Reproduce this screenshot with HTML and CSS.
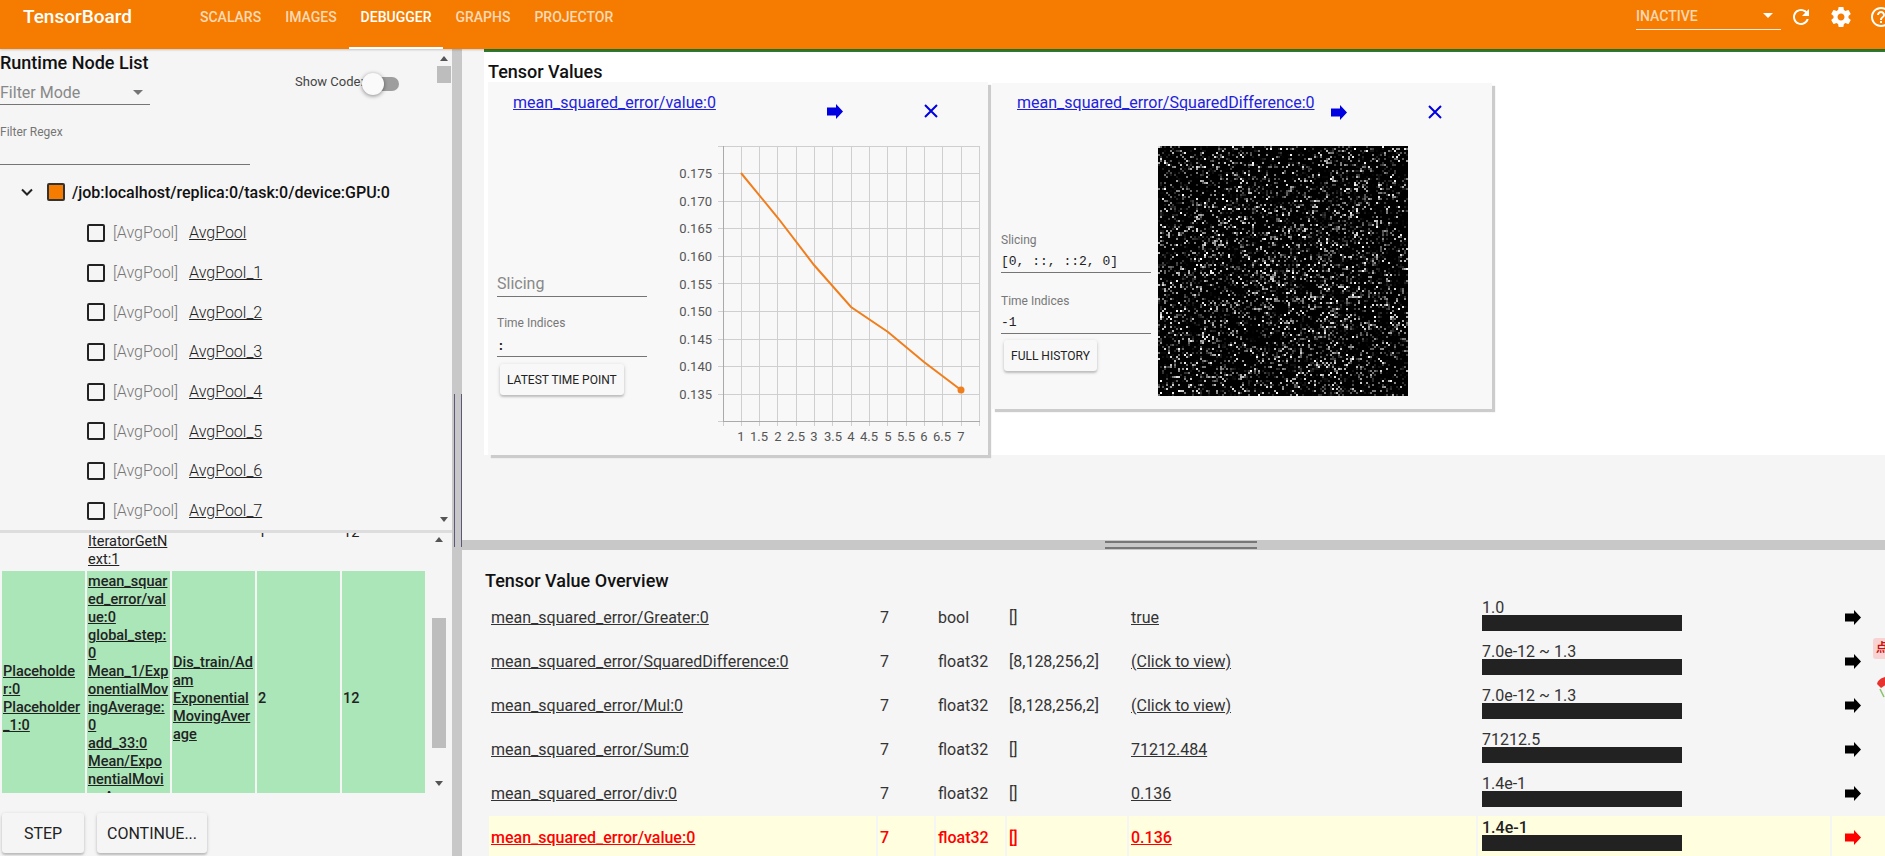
FILE: index.html
```html
<!DOCTYPE html>
<html>
	<head>
		<meta charset="utf-8">
		<title>TensorBoard</title>
		<link rel="stylesheet" href="styles.css">
		<script defer src="app.js"></script>
	</head>

	<body>
		<svg class="defs" width="0" height="0">
			<symbol id="go" viewBox="0 0 16 15"><path d="M0 3.500h9V0l7 7.500-7 7.500v-3.500H0z"/></symbol>
		</svg>

		<header class="toolbar">
			<span class="logo">TensorBoard</span>
			<nav class="tabs">
				<a class="tab">SCALARS</a>
				<a class="tab">IMAGES</a>
				<a class="tab active">DEBUGGER</a>
				<a class="tab">GRAPHS</a>
				<a class="tab">PROJECTOR</a>
			</nav>
			<div class="run-select">
				<span>INACTIVE</span>
				<i class="caret"></i>
			</div>
			<svg class="tool" viewBox="0 0 24 24"><path d="M17.65 6.350C16.200 4.900 14.210 4 12 4c-4.420 0-7.990 3.580-7.990 8s3.570 8 7.990 8c3.730 0 6.840-2.550 7.730-6h-2.080c-.82 2.330-3.040 4-5.650 4-3.310 0-6-2.690-6-6s2.690-6 6-6c1.660 0 3.140.69 4.220 1.780L13 11h7V4l-2.350 2.350z"/></svg>
			<svg class="tool" viewBox="0 0 24 24"><path d="M19.430 12.980c.04-.32.07-.64.07-.98s-.03-.66-.07-.98l2.110-1.650c.19-.15.24-.42.12-.64l-2-3.460c-.12-.22-.39-.3-.61-.22l-2.490 1c-.52-.4-1.080-.73-1.690-.98l-.38-2.650C14.460 2.180 14.250 2 14 2h-4c-.25 0-.46.18-.49.42l-.38 2.650c-.61.25-1.170.59-1.690.98l-2.490-1c-.23-.09-.49 0-.61.22l-2 3.460c-.13.22-.07.49.12.64l2.110 1.650c-.04.32-.07.65-.07.98s.03.66.07.98l-2.110 1.650c-.19.15-.24.42-.12.64l2 3.460c.12.22.39.3.61.22l2.490-1c.52.4 1.080.73 1.690.98l.38 2.650c.03.24.24.42.49.42h4c.25 0 .46-.18.49-.42l.38-2.650c.61-.25 1.170-.59 1.690-.98l2.490 1c.23.09.49 0 .61-.22l2-3.460c.12-.22.07-.49-.12-.64l-2.110-1.650zM12 15.500c-1.930 0-3.500-1.570-3.500-3.500s1.570-3.500 3.500-3.500 3.500 1.570 3.500 3.500-1.570 3.500-3.500 3.500z"/></svg>
			<svg class="tool help" viewBox="0 0 24 24"><path d="M11 18h2v-2h-2v2zm1-16C6.480 2 2 6.480 2 12s4.480 10 10 10 10-4.480 10-10S17.520 2 12 2zm0 18c-4.410 0-8-3.590-8-8s3.590-8 8-8 8 3.590 8 8-3.590 8-8 8zm0-14c-2.210 0-4 1.790-4 4h2c0-1.100.9-2 2-2s2 .9 2 2c0 2-3 1.750-3 5h2c0-2.250 3-2.500 3-5 0-2.210-1.790-4-4-4z"/></svg>
		</header>

		<main class="debugger">
			<aside class="sidebar">
				<section class="node-pane">
					<div class="tree">
						<div class="tree-head">
							<div class="tree-filter">
								<h2 class="pane-title">Runtime Node List</h2>
								<div class="filter-mode">
									<span>Filter Mode</span>
									<i class="caret"></i>
								</div>
							</div>
							<div class="show-code">
								<span>Show Code:</span>
								<span class="switch"><i></i></span>
							</div>
						</div>
						<label class="regex">Filter Regex</label>
						<div class="regex-input"></div>

						<div class="device">
							<svg class="chevron" viewBox="0 0 12 8"><path d="M1 1.500l5 5 5-5" /></svg>
							<span class="device-box"></span>
							<span>/job:localhost/replica:0/task:0/device:GPU:0</span>
						</div>

						<ul class="nodes">
							<li><span class="check"></span><span class="op">[AvgPool]</span><a>AvgPool</a></li>
							<li><span class="check"></span><span class="op">[AvgPool]</span><a>AvgPool_1</a></li>
							<li><span class="check"></span><span class="op">[AvgPool]</span><a>AvgPool_2</a></li>
							<li><span class="check"></span><span class="op">[AvgPool]</span><a>AvgPool_3</a></li>
							<li><span class="check"></span><span class="op">[AvgPool]</span><a>AvgPool_4</a></li>
							<li><span class="check"></span><span class="op">[AvgPool]</span><a>AvgPool_5</a></li>
							<li><span class="check"></span><span class="op">[AvgPool]</span><a>AvgPool_6</a></li>
							<li><span class="check"></span><span class="op">[AvgPool]</span><a>AvgPool_7</a></li>
						</ul>
					</div>
					<div class="scroll scroll-nodes">
						<i class="up"></i>
						<b></b>
						<i class="down"></i>
					</div>
				</section>

				<section class="watch-pane">
					<div class="watch-clip">
						<table class="watch">
							<tr>
								<td></td>
								<td><a>IteratorGetN<br>ext:0</a><br><a>IteratorGetN<br>ext:1</a></td>
								<td></td>
								<td>1</td>
								<td>12</td>
							</tr>
							<tr class="current">
								<td><a>Placeholde<br>r:0</a><br><a>Placeholder<br>_1:0</a></td>
								<td><a>mean_squar<br>ed_error/val<br>ue:0</a><br><a>global_step:<br>0</a><br><a>Mean_1/Exp<br>onentialMov<br>ingAverage:<br>0</a><br><a>add_33:0</a><br><a>Mean/Expo<br>nentialMovi<br>ngAverage:<br>0</a></td>
								<td><a>Dis_train/Ad<br>am</a><br><a>Exponential<br>MovingAver<br>age</a></td>
								<td>2</td>
								<td>12</td>
							</tr>
						</table>
					</div>
					<div class="scroll scroll-watch">
						<i class="up"></i>
						<b></b>
						<i class="down"></i>
					</div>
				</section>

				<footer class="stepper">
					<button class="raised step">STEP</button>
					<button class="raised">CONTINUE...</button>
				</footer>
			</aside>

			<div class="divider"><i></i></div>

			<div class="workspace">
				<section class="values-area">
					<div class="values">
						<h2 class="pane-title">Tensor Values</h2>
						<div class="cards">
							<article class="card card-chart">
								<div class="card-head">
									<a class="tensor-link">mean_squared_error/value:0</a>
									<svg class="go go-blue"><use href="#go"/></svg>
									<svg class="close" viewBox="0 0 14 14"><path d="M1 1l12 12M13 1L1 13"/></svg>
								</div>
								<div class="card-body">
									<div class="controls">
										<div class="field">
											<label></label>
											<div class="input placeholder">Slicing</div>
										</div>
										<div class="field">
											<label>Time Indices</label>
											<div class="input mono">:</div>
										</div>
										<button class="raised small">LATEST TIME POINT</button>
									</div>
									<svg class="chart" viewBox="680 145 305 300">
										<path class="grid" d="M723.500 146V426M741.500 146V426M759.500 146V426M777.500 146V426M796.500 146V426M814.500 146V426M832.500 146V426M851.500 146V426M869.500 146V426M887.500 146V426M906.500 146V426M924.500 146V426M942.500 146V426M961.500 146V426M979.500 146V426"/>
										<path class="grid" d="M718 146.500H980M718 173.500H980M718 201.500H980M718 228.500H980M718 256.500H980M718 283.500H980M718 311.500H980M718 339.500H980M718 366.500H980M718 394.500H980M718 421.500H980"/>
										<path class="axis" d="M723.500 146V422M723 421.500H980"/>
										<g class="y-labels">
											<text x="712" y="178">0.175</text>
											<text x="712" y="206">0.170</text>
											<text x="712" y="233">0.165</text>
											<text x="712" y="261">0.160</text>
											<text x="712" y="289">0.155</text>
											<text x="712" y="316">0.150</text>
											<text x="712" y="344">0.145</text>
											<text x="712" y="371">0.140</text>
											<text x="712" y="399">0.135</text>
										</g>
										<g class="x-labels">
											<text x="741" y="441">1</text>
											<text x="759" y="441">1.5</text>
											<text x="778" y="441">2</text>
											<text x="796" y="441">2.5</text>
											<text x="814" y="441">3</text>
											<text x="833" y="441">3.5</text>
											<text x="851" y="441">4</text>
											<text x="869" y="441">4.5</text>
											<text x="888" y="441">5</text>
											<text x="906" y="441">5.5</text>
											<text x="924" y="441">6</text>
											<text x="942" y="441">6.5</text>
											<text x="961" y="441">7</text>
										</g>
										<path class="series" d="M741 173L778 218L814 265L851 307L888 332L924 362L961 390"/>
										<circle class="series-end" cx="961" cy="390" r="3.500"/>
									</svg>
								</div>
							</article>

							<article class="card card-image">
								<div class="card-head">
									<a class="tensor-link">mean_squared_error/SquaredDifference:0</a>
									<svg class="go go-blue"><use href="#go"/></svg>
									<svg class="close" viewBox="0 0 14 14"><path d="M1 1l12 12M13 1L1 13"/></svg>
								</div>
								<div class="card-body">
									<div class="controls">
										<div class="field">
											<label>Slicing</label>
											<div class="input mono">[0, ::, ::2, 0]</div>
										</div>
										<div class="field">
											<label>Time Indices</label>
											<div class="input mono">-1</div>
										</div>
										<button class="raised small">FULL HISTORY</button>
									</div>
									<canvas id="Noise" class="noise" width="125" height="125"></canvas>
								</div>
							</article>
						</div>
					</div>
				</section>

				<div class="splitter"><i></i></div>

				<section class="overview">
					<h2 class="pane-title">Tensor Value Overview</h2>
					<table class="tensors">
						<colgroup>
							<col class="c-name"><col class="c-count"><col class="c-type"><col class="c-shape"><col class="c-value"><col class="c-stat"><col class="c-go">
						</colgroup>
						<tr>
							<td><a>mean_squared_error/Greater:0</a></td>
							<td>7</td><td>bool</td><td>[]</td>
							<td><a>true</a></td>
							<td class="stat"><div>1.0</div><i></i></td>
							<td class="jump"><svg class="go"><use href="#go"/></svg></td>
						</tr>
						<tr>
							<td><a>mean_squared_error/SquaredDifference:0</a></td>
							<td>7</td><td>float32</td><td>[8,128,256,2]</td>
							<td><a>(Click to view)</a></td>
							<td class="stat"><div>7.0e-12 ~ 1.3</div><i></i></td>
							<td class="jump"><svg class="go"><use href="#go"/></svg></td>
						</tr>
						<tr>
							<td><a>mean_squared_error/Mul:0</a></td>
							<td>7</td><td>float32</td><td>[8,128,256,2]</td>
							<td><a>(Click to view)</a></td>
							<td class="stat"><div>7.0e-12 ~ 1.3</div><i></i></td>
							<td class="jump"><svg class="go"><use href="#go"/></svg></td>
						</tr>
						<tr>
							<td><a>mean_squared_error/Sum:0</a></td>
							<td>7</td><td>float32</td><td>[]</td>
							<td><a>71212.484</a></td>
							<td class="stat"><div>71212.5</div><i></i></td>
							<td class="jump"><svg class="go"><use href="#go"/></svg></td>
						</tr>
						<tr>
							<td><a>mean_squared_error/div:0</a></td>
							<td>7</td><td>float32</td><td>[]</td>
							<td><a>0.136</a></td>
							<td class="stat"><div>1.4e-1</div><i></i></td>
							<td class="jump"><svg class="go"><use href="#go"/></svg></td>
						</tr>
						<tr class="active-row">
							<td><a>mean_squared_error/value:0</a></td>
							<td>7</td><td>float32</td><td>[]</td>
							<td><a>0.136</a></td>
							<td class="stat"><div>1.4e-1</div><i></i></td>
							<td class="jump"><svg class="go"><use href="#go"/></svg></td>
						</tr>
					</table>
				</section>
			</div>
		</main>

		<div class="float-badge">点</div>
		<svg class="float-chute" viewBox="0 0 10 26"><path d="M0 8C1 4 4 2 8 1l2 0v7L4 12z" fill="#e8322e"/><path d="M3 13l4 8" stroke="#8cbf6a" stroke-width="1.500" fill="none"/></svg>
	</body>
</html>
```

FILE: styles.css
```css
:root {
	box-sizing: border-box;
}

*, *::before, *::after {
	box-sizing: inherit;
}

html, body {
	height: 100%;
}

body {
	margin: 0;
	overflow: hidden;
	background-color: #f5f5f5;
	color: #212121;
	font-family: "Roboto", "Noto Sans CJK SC", sans-serif;
	font-size: 16px;
}

a {
	text-decoration: underline;
}

.defs {
	display: block;
	height: 0;
}

.caret {
	width: 0;
	height: 0;
	border-inline: 5px solid transparent;
	border-top: 5px solid #757575;
}

/* top bar */
.toolbar {
	position: relative;
	z-index: 2;
	display: flex;
	height: 49px;
	padding-left: 23px;
	overflow: hidden;
	background-color: #f57c00;
	box-shadow: 0 1px 2px rgba(0, 0, 0, 0.2);
	color: white;
}

.logo {
	width: 165px;
	flex-shrink: 0;
	padding-top: 5px;
	font-size: 19px;
	font-weight: 500;
	line-height: 24px;
}

.tabs {
	display: flex;
}

.tab {
	height: 49px;
	padding: 8px 12px 0;
	border-bottom: 2px solid transparent;
	color: rgba(255, 255, 255, 0.72);
	font-size: 14px;
	font-weight: 500;
	line-height: 18px;
	text-decoration: none;

	&.active {
		border-bottom-color: white;
		color: white;
	}
}

.run-select {
	display: flex;
	align-items: center;
	justify-content: space-between;
	width: 145px;
	height: 30px;
	margin-left: auto;
	padding: 2px 8px 0 0;
	border-bottom: 1px solid rgba(255, 255, 255, 0.85);
	color: rgba(255, 255, 255, 0.7);
	font-size: 14px;
	font-weight: 500;

	& .caret {
		border-top-color: white;
	}
}

.tool {
	width: 24px;
	height: 24px;
	flex-shrink: 0;
	margin-top: 5px;
	margin-left: 16px;
	fill: white;

	&:first-of-type {
		margin-left: 8px;
	}

	&.help {
		margin-right: -8px;
	}
}

/* page frame */
.debugger {
	display: grid;
	grid-template-columns: 452px 10px 1fr;
	height: 807px;
}

.pane-title {
	margin: 0;
	color: #111;
	font-size: 18px;
	font-weight: 500;
	line-height: 20px;
}

.divider {
	padding-top: 345px;
	background-color: #c8c8c8;

	& > i {
		display: block;
		width: 8px;
		height: 153px;
		margin-left: 2px;
		border-inline: 1px solid #5a5a78;
	}
}

/* left column */
.sidebar {
	display: flex;
	flex-direction: column;
	min-width: 0;
}

.node-pane {
	display: flex;
	height: 481px;
	overflow: hidden;
}

.tree {
	width: 437px;
	flex-shrink: 0;
	padding-top: 4px;
}

.tree-head {
	display: flex;
}

.tree-filter {
	width: 295px;
}

.filter-mode {
	display: flex;
	align-items: center;
	justify-content: space-between;
	width: 150px;
	height: 26px;
	margin-top: 6px;
	padding: 2px 7px 0 0;
	border-bottom: 1px solid #757575;
	color: #888;
}

.show-code {
	display: flex;
	align-items: center;
	height: 24px;
	margin-top: 16px;
	color: #444;
	font-size: 13px;
}

.switch {
	position: relative;
	display: block;
	width: 29px;
	height: 14px;
	margin-top: 6px;
	margin-left: 6px;
	border-radius: 7px;
	background-color: #9e9e9e;

	& > i {
		position: absolute;
		top: -4px;
		left: -8px;
		width: 22px;
		height: 22px;
		border-radius: 50%;
		background-color: #fafafa;
		box-shadow: 0 1px 4px rgba(0, 0, 0, 0.45);
	}
}

.regex {
	display: block;
	margin-top: 20px;
	color: #757575;
	font-size: 12px;
	line-height: 14px;
}

.regex-input {
	width: 250px;
	height: 26px;
	border-bottom: 1px solid #757575;
}

.device {
	display: flex;
	align-items: center;
	height: 24px;
	margin-top: 15px;
	padding-left: 21px;
	color: #111;
	font-weight: 500;
}

.chevron {
	width: 12px;
	height: 8px;
	fill: none;
	stroke: #222;
	stroke-width: 2;
}

.device-box {
	width: 18px;
	height: 18px;
	margin-inline: 14px 7px;
	border: 2px solid #333;
	border-radius: 2px;
	background-color: #f57c00;
}

.nodes {
	display: grid;
	grid-auto-rows: 39.700px;
	margin: 9px 0 0;
	padding: 0 0 0 87px;
	list-style: none;
	font-weight: 300;

	& > li {
		display: flex;
		align-items: center;
	}

	& a {
		margin-left: 11px;
		color: #222;
	}
}

.check {
	width: 18px;
	height: 18px;
	margin-right: 8px;
	border: 2px solid #222;
	border-radius: 2px;
}

.op {
	color: #777;
}

.scroll {
	display: flex;
	flex-direction: column;
	align-items: center;
	width: 14px;
	flex-shrink: 0;

	& > b {
		display: block;
		width: 100%;
		background-color: #bdbdbd;
	}

	& > i {
		width: 0;
		height: 0;
		border-inline: 4px solid transparent;
	}

	& > .up {
		border-bottom: 5px solid #555;
	}

	& > .down {
		border-top: 5px solid #555;
	}
}

.scroll-nodes {
	padding-top: 7px;

	& > b {
		height: 17px;
		margin-top: 5px;
	}

	& > .down {
		margin-top: 434px;
	}
}

.scroll-watch {
	padding-top: 4px;

	& > b {
		height: 130px;
		margin-top: 76px;
	}

	& > .down {
		margin-top: 33px;
	}
}

.watch-pane {
	display: flex;
	height: 263px;
	border-top: 3px solid #ddd;
}

.watch-clip {
	width: 432px;
	flex-shrink: 0;
	overflow: hidden;
}

.watch {
	width: 427px;
	margin-top: -38px;
	border-spacing: 2px;
	table-layout: fixed;
	font-size: 14.500px;
	line-height: 18px;

	& td {
		padding: 0 1px;
		overflow: hidden;
		color: #222;
		white-space: nowrap;
	}

	& .current td {
		padding-block: 2px;
		background-color: #abe6b9;
		font-weight: 500;
	}
}

.stepper {
	display: flex;
	gap: 13px;
	padding: 20px 0 0 2px;
}

.raised {
	height: 40px;
	padding: 0 10px;
	border: 0;
	border-radius: 3px;
	background-color: #f5f5f5;
	box-shadow: 0 2px 2px rgba(0, 0, 0, 0.16), 0 1px 4px rgba(0, 0, 0, 0.14);
	color: #222;
	font-family: inherit;
	font-size: 16px;

	&.step {
		width: 82px;
	}

	&.small {
		height: 31px;
		margin: 7px 0 0 3px;
		padding: 0 7px;
		background-color: #f8f8f8;
		font-size: 12px;
	}
}

/* right column */
.workspace {
	display: flex;
	flex-direction: column;
	min-width: 0;
}

.values-area {
	height: 491px;
	padding-left: 22px;
}

.values {
	height: 406px;
	padding: 10px 0 0 4px;
	border-top: 3px solid #2e7d32;
	background-color: white;
}

.cards {
	display: flex;
	align-items: flex-start;
	gap: 4px;
}

.card {
	width: 500px;
	flex-shrink: 0;
	background-color: #f8f8f8;
	box-shadow: 3px 3px 1px #cccccc;
}

.card-chart {
	height: 373px;
}

.card-image {
	height: 326px;
	margin-top: 1px;
}

.card-head {
	display: grid;
	grid-template-columns: 314px 97px 14px;
	height: 63px;
	padding-left: 25px;
}

.tensor-link {
	margin-top: 11px;
	color: #2222dd;
	line-height: 20px;
	white-space: nowrap;
}

.card-image .tensor-link {
	margin-top: 10px;
}

.go {
	display: block;
	width: 16px;
	height: 15px;
	fill: black;

	&.go-blue {
		margin-top: 22px;
		fill: #0000e0;
	}
}

.close {
	width: 14px;
	height: 14px;
	margin-top: 22px;
	fill: none;
	stroke: #0000e0;
	stroke-width: 2;
}

.card-body {
	display: flex;
}

.controls {
	width: 150px;
	flex-shrink: 0;
	margin-left: 9px;
	padding-top: 112px;
}

.card-image .controls {
	padding-top: 87px;
}

.field + .field {
	margin-top: 19px;
}

.card-image .field + .field {
	margin-top: 21px;
}

.card-image .raised.small {
	margin-top: 6px;
}

.field > label {
	display: block;
	height: 14px;
	color: #777;
	font-size: 12px;
	line-height: 14px;
}

.input {
	height: 26px;
	border-bottom: 1px solid #757575;
	line-height: 26px;

	&.placeholder {
		color: #888;
	}

	&.mono {
		color: #222;
		font-family: "Liberation Mono", monospace;
		font-size: 13px;
		line-height: 29px;
	}
}

.card-chart .input.mono {
	height: 27px;
	font-weight: 700;
	line-height: 33px;
}

.chart {
	width: 305px;
	height: 300px;
	margin-left: 33px;
	overflow: visible;

	& .grid {
		fill: none;
		stroke: #cfcfcf;
		stroke-width: 1;
		shape-rendering: crispEdges;
	}

	& .axis {
		fill: none;
		stroke: #aaaaaa;
		stroke-width: 1;
		shape-rendering: crispEdges;
	}

	& text {
		fill: #555;
		font-size: 13px;
	}

	& .y-labels text {
		text-anchor: end;
	}

	& .x-labels text {
		text-anchor: middle;
	}

	& .series {
		fill: none;
		stroke: #f07e1c;
		stroke-width: 2;
	}

	& .series-end {
		fill: #f07e1c;
	}
}

.noise {
	width: 250px;
	height: 250px;
	margin-left: 7px;
	image-rendering: pixelated;
}

.splitter {
	height: 10px;
	flex-shrink: 0;
	padding: 1px 0 0 643px;
	background-color: #c8c8c8;

	& > i {
		display: block;
		width: 152px;
		height: 8px;
		border-block: 2px solid #777;
	}
}

.overview {
	flex-grow: 1;
	min-height: 0;
	padding: 21px 0 0 23px;
	overflow: hidden;
}

.tensors {
	width: 1396px;
	margin: 3px 0 0 2px;
	border-spacing: 2px;
	table-layout: fixed;
	color: #333;

	& .c-name { width: 387px; }
	& .c-count { width: 56px; }
	& .c-type { width: 69px; }
	& .c-shape { width: 120px; }
	& .c-value { width: 347px; }
	& .c-stat { width: 352px; }
	& .c-go { width: 53px; }

	& td {
		height: 42px;
		padding: 0 2px;
	}

	& .stat {
		padding: 4px 4px 0;
		vertical-align: top;

		& > div {
			line-height: 15px;
		}

		& > i {
			display: block;
			width: 200px;
			height: 16px;
			background-color: #222;
		}
	}

	& .jump {
		padding-left: 13px;
	}

	& .active-row td {
		background-color: #ffffe0;
		color: #f00;
		font-weight: 500;
	}

	& .active-row .stat > div {
		color: #222;
	}

	& .active-row .go {
		fill: #f00;
	}
}

/* page helper floating on the right edge */
.float-badge {
	position: absolute;
	top: 638px;
	left: 1873px;
	width: 20px;
	height: 21px;
	padding-left: 3px;
	border-radius: 3px;
	background-color: #f9d3d3;
	color: #c81414;
	font-size: 12px;
	font-weight: 700;
	line-height: 21px;
}

.float-chute {
	position: absolute;
	top: 676px;
	left: 1877px;
	width: 10px;
	height: 26px;
}
```

FILE: app.js
```js
// the tensor image is a plain noise field, drawn once
const canvas = document.getElementById('Noise')
const ctx = canvas.getContext('2d')
const { width, height } = canvas
const image = ctx.createImageData(width, height)

let seed = 90125
const random = () => {
	seed = (seed * 1664525 + 1013904223) % 4294967296
	return seed / 4294967296
}

for(let y = 0; y < height; y += 1) {
	for(let x = 0; x < width; x += 1) {
		const dist = Math.hypot(x - 70, y - 65) / 90
		const density = 0.5 - dist * 0.12
		const on = random() < density
		const level = on ? Math.pow(random(), 3.2) * 255 : 0
		const at = (y * width + x) * 4
		image.data[at] = level
		image.data[at + 1] = level
		image.data[at + 2] = level
		image.data[at + 3] = 255
	}
}

ctx.putImageData(image, 0, 0)
```
